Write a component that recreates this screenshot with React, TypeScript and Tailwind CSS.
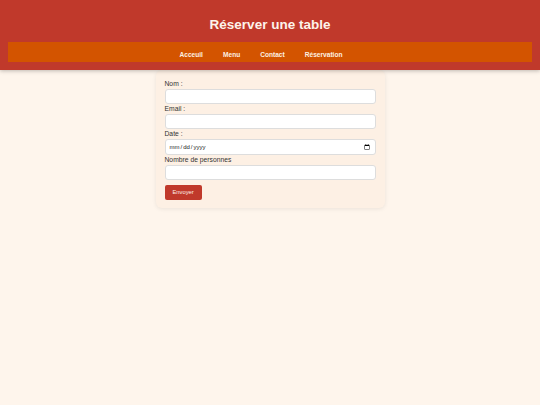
import React from 'react';

const links = ['Acceuil', 'Menu', 'Contact', 'Réservation'];

export default function App() {
  return (
    <div className="min-h-screen bg-[#fef5ec] font-['Liberation_Sans',Arial,sans-serif] text-[#333]">
      {/* Header */}
      <header className="relative z-10 bg-[#c0392b] pt-[17px] pb-[8px] shadow-[0_1px_4px_rgba(0,0,0,0.25)]">
        <h1 className="text-center text-[13.5px] leading-[15.5px] font-bold text-[#fdf3ea]">
          Réserver une table
        </h1>
        <nav className="mx-[8px] mt-[9.5px] flex h-[20px] items-center bg-[#d35400]">
          <ul className="flex w-full justify-center gap-[20px] pr-[18px]">
            {links.map((link) => (
              <li key={link}>
                <a href="#" className="text-[6.6px] font-bold text-[#fdf0e2]">
                  {link}
                </a>
              </li>
            ))}
          </ul>
        </nav>
      </header>

      {/* Form card */}
      <main className="mx-auto w-[229px] rounded-[6px] bg-[#fdf0e4] px-[9px] pt-[9px] pb-[8px] shadow-[0_1px_4px_rgba(0,0,0,0.08)]">
        <form className="flex flex-col" onSubmit={(e) => e.preventDefault()}>
          <label className="text-[6.75px] leading-[10px]">Nom :</label>
          <input
            type="text"
            className="h-[15px] w-full rounded-[3px] border border-[#ddd] bg-white px-[3px] text-[6.5px]"
          />
          <label className="text-[6.75px] leading-[10px]">Email :</label>
          <input
            type="email"
            className="h-[15px] w-full rounded-[3px] border border-[#ddd] bg-white px-[3px] text-[6.5px]"
          />
          <label className="text-[6.75px] leading-[10px]">Date :</label>
          <input
            type="date"
            className="h-[16px] w-full rounded-[3px] border border-[#ddd] bg-white px-[3px] text-[6px] text-[#222]"
          />
          <label className="text-[6.75px] leading-[10px]">Nombre de personnes</label>
          <input
            type="number"
            className="h-[15px] w-full rounded-[3px] border border-[#ddd] bg-white px-[3px] text-[6.5px]"
          />
          <div className="mt-[5px] flex">
            <button
              type="submit"
              className="h-[15px] rounded-[2px] bg-[#c0392b] px-[8px] text-[5.8px] leading-none text-[#fdeee6]"
            >
              Envoyer
            </button>
          </div>
        </form>
      </main>
    </div>
  );
}
